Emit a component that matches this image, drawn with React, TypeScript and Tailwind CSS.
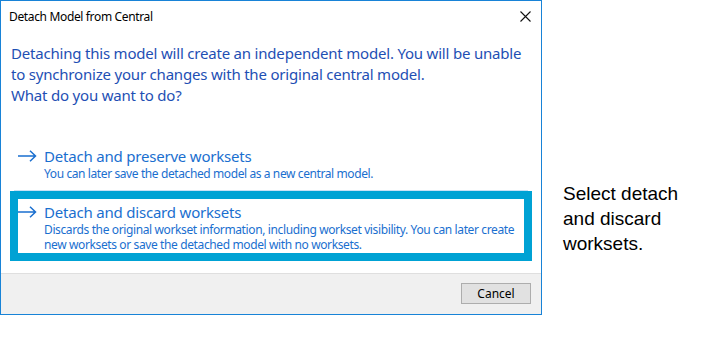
import React from "react";

const Arrow = () => (
  <svg width="19" height="12" viewBox="0 0 19 12" className="shrink-0">
    <path d="M0 6 H17.5 M12 0.8 L17.5 6 L12 11.2" fill="none" stroke="#1a6fcf" strokeWidth="1.5" />
  </svg>
);

export default function App() {
  const seg = { fontFamily: '"Noto Sans", "Open Sans", sans-serif' };
  return (
    <div className="w-[719px] h-[347px] bg-white flex items-start">
      <div
        className="w-[542px] h-[315px] border border-[#1883d7] flex flex-col bg-white shrink-0"
        style={seg}
      >
        <div className="h-[31px] flex items-center justify-between pl-[8px] pr-[10px]">
          <span className="text-[12px] text-black tracking-[-0.35px]">Detach Model from Central</span>
          <svg width="11" height="11" viewBox="0 0 11 11">
            <path d="M0.5 0.5 L10.5 10.5 M10.5 0.5 L0.5 10.5" stroke="#111" strokeWidth="1.1" />
          </svg>
        </div>
        <div className="pl-[10px] pt-[11px] text-[15px] leading-[21px] text-[#1e4fb4] tracking-[-0.2px] whitespace-nowrap">
          <div>Detaching this model will create an independent model. You will be unable</div>
          <div>to synchronize your changes with the original central model.</div>
          <div>What do you want to do?</div>
        </div>
        <div className="mt-[34px] mx-[13px] pl-[4px] pt-[6px] pb-[9px] border-b border-[#c9e1f5] flex gap-[7px] text-[#1a6fcf]">
          <div className="h-[20px] flex items-center"><Arrow /></div>
          <div className="flex flex-col">
            <div className="text-[15px] leading-[20px] tracking-[-0.2px]">Detach and preserve worksets</div>
            <div className="text-[12px] leading-[15px] tracking-[-0.4px]">You can later save the detached model as a new central model.</div>
          </div>
        </div>
        <div className="mx-[9px] border-[8px] border-[#00a2d4] pt-[3px] pb-[1px] flex gap-[7px] text-[#1a6fcf]">
          <div className="h-[20px] flex items-center"><Arrow /></div>
          <div className="flex flex-col whitespace-nowrap">
            <div className="text-[15px] leading-[20px] tracking-[-0.2px]">Detach and discard worksets</div>
            <div className="text-[12px] leading-[15px] tracking-[-0.38px]">
              Discards the original workset information, including workset visibility. You can later create
            </div>
            <div className="text-[12px] leading-[15px] tracking-[-0.38px]">new worksets or save the detached model with no worksets.</div>
          </div>
        </div>
        <div className="mt-auto h-[41px] bg-[#f0f0f0] border-t border-[#dfdfdf] flex justify-end items-start pt-[9px] pr-[10px]">
          <button className="w-[70px] h-[21px] bg-[#e1e1e1] border border-[#adadad] text-[12px] text-black flex items-center justify-center">
            Cancel
          </button>
        </div>
      </div>
      <div
        className="ml-[21px] mt-[181px] text-[19px] leading-[25px] text-black"
        style={{ fontFamily: '"Liberation Sans", Arial, sans-serif' }}
      >
        Select detach
        <br />
        and discard
        <br />
        worksets.
      </div>
    </div>
  );
}
